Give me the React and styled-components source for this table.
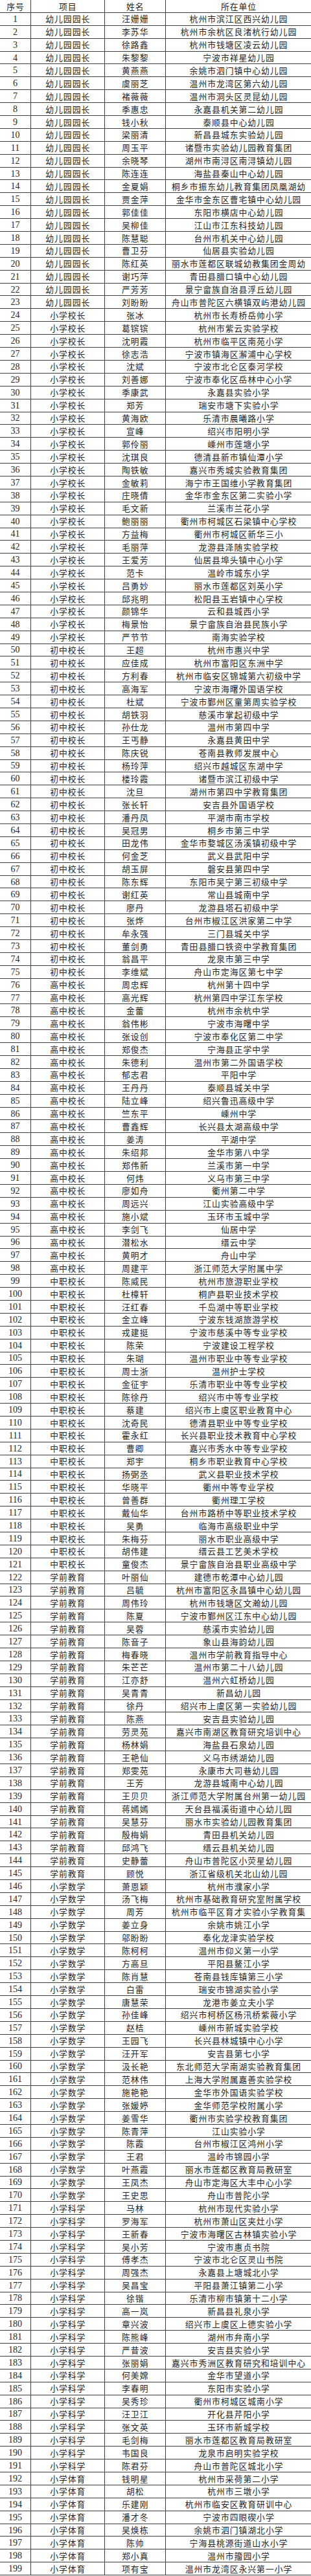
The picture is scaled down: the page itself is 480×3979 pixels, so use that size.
import React from "react";
import styled, { createGlobalStyle } from "styled-components";

const Global = createGlobalStyle`
  html, body { margin: 0; padding: 0; background: #fff; }
  body { font-family: "Noto Sans CJK SC", "Noto Sans", sans-serif; color: #262626; }
`;

const ROW_H = 19.895;

const Table = styled.div`
  width: 480px;
  display: flex;
  flex-direction: column;
  overflow: hidden;
`;

const Row = styled.div`
  display: grid;
  grid-template-columns: 48px 113.5px 94.5px 1fr;
  height: ${ROW_H}px;
  box-sizing: border-box;
  border-bottom: 1px solid #3c3c3c;
`;

const Cell = styled.div`
  display: flex;
  align-items: center;
  justify-content: center;
  box-sizing: border-box;
  padding-top: 1px;
  white-space: nowrap;
  overflow: hidden;
  border-right: ${(p) => (p.$last ? "none" : "1px solid #3c3c3c")};
  font-family: ${(p) =>
    p.$num
      ? '"Liberation Serif", "Noto Sans CJK SC", serif'
      : '"Noto Sans CJK SC", "Noto Sans", sans-serif'};
  font-size: ${(p) => (p.$num ? "14px" : "12.8px")};
  letter-spacing: ${(p) => (p.$num ? "0" : "1px")};
  text-indent: ${(p) => (p.$num ? "0" : "1px")};
  line-height: 1;
  color: #262626;
`;

const groups = [
  ["幼儿园园长", [
    "汪姗姗 杭州市滨江区西兴幼儿园", "李苏华 杭州市余杭区良渚杭行幼儿园", "徐路鑫 杭州市钱塘区凌云幼儿园",
    "朱黎黎 宁波市祥星幼儿园", "黄燕燕 余姚市泗门镇中心幼儿园", "虞丽芝 温州市龙湾区第六幼儿园",
    "褚薇薇 温州市洞头区灵昆幼儿园", "季惠忠 永嘉县机关第二幼儿园", "钱小秋 泰顺县中心幼儿园",
    "梁丽清 新昌县城东实验幼儿园", "周玉平 诸暨市实验幼儿园教育集团", "余晓琴 湖州市南浔区南浔镇幼儿园",
    "陈连连 海盐县秦山中心幼儿园", "金夏娟 桐乡市振东幼儿教育集团凤凰湖幼", "贾金萍 金华市金东区曹宅镇中心幼儿园",
    "郭佳佳 东阳市横店中心幼儿园", "吴柳佳 江山市江东科技幼儿园", "陈慧聪 台州市机关中心幼儿园",
    "曹卫芬 仙居县实验幼儿园", "陈红英 丽水市莲都区联城幼教集团金周幼", "谢巧萍 青田县腊口镇中心幼儿园",
    "严芳芳 景宁畲族自治县浮丘幼儿园", "刘盼盼 舟山市普陀区六横镇双屿港幼儿园",
  ]],
  ["小学校长", [
    "张冰 杭州市长寿桥岳帅小学", "葛镔镔 杭州市紫云实验学校", "沈明霞 杭州市临平区南苑小学",
    "徐志浩 宁波市镇海区澥浦中心学校", "沈斌 宁波市北仑区泰河学校", "刘善娜 宁波市奉化区岳林中心小学",
    "季康武 永嘉县实验小学", "郑芳 瑞安市塘下实验小学", "黄海欧 乐清市晨曦路小学",
    "宣峰 绍兴市阳明小学", "郭伶丽 嵊州市莲塘小学", "沈琪良 德清县新市镇仙潭小学",
    "陶铁敏 嘉兴市秀城实验教育集团", "金敏莉 海宁市王国维小学教育集团", "庄晓倩 金华市金东区第二实验小学",
    "毛文新 兰溪市兰花小学", "鲍丽丽 衢州市柯城区石梁镇中心学校", "方益梅 衢州市柯城区新华三小",
    "毛丽萍 龙游县泽随实验学校", "王爱芳 仙居县埠头镇中心小学", "范卡 温岭市城东小学",
    "吕勇妙 丽水市莲都区刘英小学", "邱兆明 松阳县玉岩镇中心学校", "颜锦华 云和县城西小学",
    "梅景怡 景宁畲族自治县民族小学", "严节节 南海实验学校",
  ]],
  ["初中校长", [
    "王超 杭州市惠兴中学", "应佳成 杭州市富阳区东洲中学", "方利春 杭州市临安区锦城第六初级中学",
    "高海军 宁波市海曙外国语学校", "杜斌 宁波市鄞州区童第周实验学校", "胡铁羽 慈溪市掌起初级中学",
    "孙仕龙 温州市第四中学", "王丐静 永嘉县黄田中学", "陈庆锐 苍南县教师发展中心",
    "杨玲萍 绍兴市越城区东湖中学", "楼玲霞 诸暨市滨江初级中学", "沈旦 湖州市第四中学教育集团",
    "张长轩 安吉县外国语学校", "潘丹凤 平湖市南市学校", "吴冠男 桐乡市第三中学",
    "田龙伟 金华市婺城区汤溪镇初级中学", "何金芝 武义县武阳中学", "胡玉屏 磐安县第四中学",
    "陈东辉 东阳市吴宁第三初级中学", "谢红英 常山县城南中学", "廖丹 龙游县塔石初级中学",
    "张烨 台州市椒江区洪家第二中学", "牟永强 三门县城关中学", "董剑勇 青田县腊口铁资中学教育集团",
    "翁昌平 龙泉市第三中学", "李维斌 舟山市定海区第七中学",
  ]],
  ["高中校长", [
    "周忠辉 杭州第十四中学", "高光辉 杭州第四中学江东学校", "金蕾 杭州市余杭中学",
    "翁伟彬 宁波市海曙中学", "张设创 宁波市奉化区第二中学", "郑俊杰 宁海县正学中学",
    "朱德利 温州市第二外国语学校", "郁志君 平阳中学", "王丹丹 泰顺县城关中学",
    "陆立峰 绍兴鲁迅高级中学", "竺东平 嵊州中学", "曹鑫辉 长兴县太湖高级中学",
    "姜涛 平湖中学", "朱绍邦 金华市第八中学", "郑伟新 兰溪市第一中学",
    "何炜 义乌市第三中学", "廖如舟 衢州第二中学", "周远兴 江山实验高级中学",
    "施小斌 玉环市玉城中学", "李剑飞 仙居中学", "潜松水 缙云中学",
    "黄明才 舟山中学", "周建平 浙江师范大学附属中学",
  ]],
  ["中职校长", [
    "陈威民 杭州市旅游职业学校", "杜樟轩 桐庐县职业技术学校", "汪红春 千岛湖中等职业学校",
    "金立峰 宁波东钱湖旅游学校", "戎建挺 宁波市慈溪中等专业学校", "陈荣 宁波建设工程学校",
    "朱瑚 温州市职业中等专业学校", "周士浙 温州护士学校", "金征宇 乐清市职业中等专业学校",
    "陈徐丹 绍兴市中等专业学校", "蔡建 绍兴市上虞区职业教育中心", "沈奇民 德清县职业中等专业学校",
    "霍永红 长兴县职业技术教育中心学校", "曹卿 嘉兴市秀水中等专业学校", "郑宇 桐乡市职业教育中心学校",
    "扬弼丞 武义县职业技术学校", "华晓平 衢州中等专业学校", "曾善群 衢州理工学校",
    "戴仙华 台州市路桥中等职业技术学校", "吴勇 临海市高级职业中学", "朱梅芬 丽水市职业高级中学",
    "胡伟建 缙云县工艺美术学校", "童俊杰 景宁畲族自治县职业高级中学",
  ]],
  ["学前教育", [
    "叶丽仙 建德市乾潭中心幼儿园", "吕毓 杭州市富阳区永昌镇中心幼儿园", "周伟玲 杭州市钱塘区文瀚幼儿园",
    "陈夏 宁波市鄞州区江东中心幼儿园", "吴蓉 慈溪市实验幼儿园", "陈音子 象山县海韵幼儿园",
    "梅春晓 温州市学前教育指导中心", "朱芒芒 温州市第二十八幼儿园", "江亦舒 温州六虹桥幼儿园",
    "吴青青 新昌幼儿园", "徐丹 绍兴市上虞区第一实验幼儿园", "陈燕 安吉县实验幼儿园",
    "劳灵苑 嘉兴市南湖区教育研究培训中心", "杨林娟 海盐县石泉幼儿园", "王艳仙 义乌市绣湖幼儿园",
    "郑雯苑 永康市大司巷幼儿园", "王芳 龙游县城南中心幼儿园", "王贝贝 浙江师范大学附属台州第一幼儿园",
    "蒋嫣嫣 天台县福溪街道中心幼儿园", "吴慧芬 丽水市实验幼儿园教育集团", "殷梅娟 青田县机关幼儿园",
    "邱鸿飞 缙云县机关幼儿园", "史静蕾 舟山市普陀区小荧星幼儿园", "顾悦 浙江省级机关北山幼儿园",
  ]],
  ["小学数学", [
    "萧恩颖 杭州市濮家小学", "汤飞梅 杭州市基础教育研究室附属学校", "周芳 杭州市临平区育才实验小学教育集",
    "姜立身 余姚市姚江小学", "邬盼盼 奉化龙津实验学校", "陈柯柯 温州市仰义第一小学",
    "方高旦 平阳县鳌江小学", "陈肖慧 苍南县钱库镇第三小学", "白雷 瑞安市锦湖实验小学",
    "唐慧荣 龙港市姜立夫小学", "孙佳峰 绍兴市柯桥区杨汛桥紫薇小学", "赵桔 嵊州市新城实验学校",
    "王园飞 长兴县林城镇中心小学", "汪开军 安吉县第七小学", "汲长艳 东北师范大学南湖实验教育集团",
    "范林伟 上海大学附属嘉善实验学校", "施艳艳 金华市外国语实验学校", "张媛婷 金华师范学校附属小学",
    "姜雪华 衢州市实验学校教育集团", "陈青萍 江山实验小学", "陈霞 台州市椒江区鸿州小学",
    "王君 温岭市锦园小学", "叶燕霞 丽水市莲都区教育局教研室", "王凤杰 舟山市定海区大丰中心小学",
    "王史思 舟山市普陀小学",
  ]],
  ["小学科学", [
    "马林 杭州市现代实验小学", "罗海军 杭州市萧山区夹灶小学", "王新春 宁波市海曙区古林镇实验小学",
    "吴小芳 宁波市惠贞书院", "傅孝杰 宁波市北仑区灵山书院", "周强杰 永嘉县上塘城北小学",
    "吴昌宝 平阳县萧江镇第二小学", "徐锴 乐清市柳市镇第十二小学", "高一岚 新昌县礼泉小学",
    "章兴波 绍兴市上虞区上德实验小学", "陈熊峰 湖州市弁南小学", "严昔波 安吉县实验小学",
    "张丽娟 嘉兴市秀洲区教育研究和培训中心", "何美嫦 金华市望道小学", "李春明 东阳市实验小学",
    "吴秀珍 衢州市柯城区城南小学", "汪卫江 开化县芹阳小学", "张文英 玉环市新城学校",
    "毛剑梅 丽水市莲都区教育局教研室", "韦国良 龙泉市启明实验学校", "陈君芬 舟山市普陀区城北小学",
  ]],
  ["小学体育", [
    "钱明星 杭州市采荷第二小学", "胡松 杭州市三墩小学", "乐建刚 杭州市临安区教育研训中心",
    "潘才冬 宁波市四眼碶小学", "吴焕栋 余姚市泗门镇湖北小学", "陈帅 宁海县桃源街道山水小学",
    "郑小真 温州市籀园小学", "项有宝 温州市龙湾区永兴第一小学",
  ]],
];

const rows = [];
groups.forEach(([project, list]) => {
  list.forEach((entry) => {
    const [name, unit] = entry.split(" ");
    rows.push({ no: rows.length + 1, project, name, unit });
  });
});

export default function App() {
  return (
    <>
      <Global />
      <Table>
        <Row>
          <Cell>序号</Cell>
          <Cell>项目</Cell>
          <Cell>姓名</Cell>
          <Cell $last>所在单位</Cell>
        </Row>
        {rows.map((r) => (
          <Row key={r.no}>
            <Cell $num>{r.no}</Cell>
            <Cell>{r.project}</Cell>
            <Cell>{r.name}</Cell>
            <Cell $last>{r.unit}</Cell>
          </Row>
        ))}
      </Table>
    </>
  );
}
